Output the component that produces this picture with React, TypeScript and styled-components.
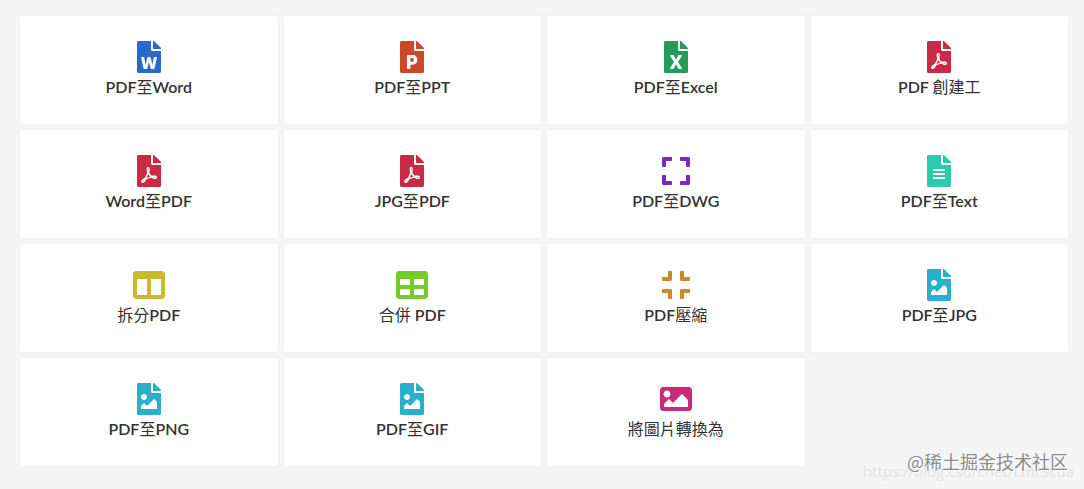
import React from "react";
import styled, { createGlobalStyle } from "styled-components";
import type { IconType } from "react-icons";
import {
  FaColumns,
  FaCompress,
  FaExpand,
  FaFileAlt,
  FaFileExcel,
  FaFileImage,
  FaFilePdf,
  FaFilePowerpoint,
  FaFileWord,
  FaImage,
  FaTable,
} from "react-icons/fa";

const GlobalStyle = createGlobalStyle`
  * { box-sizing: border-box; }
  body {
    margin: 0;
    background: #f5f5f5;
    color: #333;
    font-family: Lato, "Noto Sans CJK TC", sans-serif;
  }
`;

const Page = styled.main`
  position: relative;
  padding: 16px 16px 23px 20px;
`;

const ToolGrid = styled.nav`
  display: grid;
  grid-template-columns: repeat(4, minmax(0, 1fr));
  gap: 6px;
`;

const ToolCard = styled.a`
  display: flex;
  flex-direction: column;
  align-items: center;
  padding: 25px 8px;
  background: #fff;
  border-radius: 2px;
  box-shadow: 0 0 3px rgba(0, 0, 0, 0.04);
  color: inherit;
  text-decoration: none;
`;

const ToolIcon = styled.span<{ $color: string }>`
  display: flex;
  font-size: 32px;
  color: ${(p) => p.$color};
`;

const ToolLabel = styled.span`
  margin-top: 2px;
  font-size: 16px;
  line-height: 24px;
  font-weight: 600;
  white-space: pre;
`;

const Cjk = styled.span`
  font-weight: 400;
`;

const Watermark = styled.div`
  position: absolute;
  right: 16px;
  bottom: 16px;
  font: 18px/24px "Noto Sans CJK SC", sans-serif;
  color: #8c8c8c;
  text-shadow: 1px 1px 1px #fff;
`;

const SourceMark = styled.div`
  position: absolute;
  right: 10px;
  bottom: 8px;
  font: 15px/20px "Open Sans", sans-serif;
  color: #e2e2e2;
`;

interface Tool {
  label: string;
  color: string;
  icon: IconType;
}

const tools: Tool[] = [
  { label: "PDF至Word", color: "#2a68cb", icon: FaFileWord },
  { label: "PDF至PPT", color: "#cb482a", icon: FaFilePowerpoint },
  { label: "PDF至Excel", color: "#259b57", icon: FaFileExcel },
  { label: "PDF 創建工", color: "#cb2a45", icon: FaFilePdf },
  { label: "Word至PDF", color: "#cb2a45", icon: FaFilePdf },
  { label: "JPG至PDF", color: "#cb2a45", icon: FaFilePdf },
  { label: "PDF至DWG", color: "#762acb", icon: FaExpand },
  { label: "PDF至Text", color: "#2acbb0", icon: FaFileAlt },
  { label: "拆分PDF", color: "#cbbb2a", icon: FaColumns },
  { label: "合併 PDF", color: "#76cb2a", icon: FaTable },
  { label: "PDF壓縮", color: "#cb892a", icon: FaCompress },
  { label: "PDF至JPG", color: "#2ab0cb", icon: FaFileImage },
  { label: "PDF至PNG", color: "#2ab0cb", icon: FaFileImage },
  { label: "PDF至GIF", color: "#2ab0cb", icon: FaFileImage },
  { label: "將圖片轉換為", color: "#cb2a7b", icon: FaImage },
];

function MixedText({ text }: { text: string }) {
  const runs = text.split(/([\u4e00-\u9fff]+)/).filter(Boolean);
  return (
    <>
      {runs.map((run, i) =>
        /[\u4e00-\u9fff]/.test(run) ? <Cjk key={i}>{run}</Cjk> : run
      )}
    </>
  );
}

export default function App() {
  return (
    <>
      <GlobalStyle />
      <Page>
        <ToolGrid>
          {tools.map(({ label, color, icon: Icon }) => (
            <ToolCard key={label} href="#">
              <ToolIcon $color={color}>
                <Icon aria-hidden />
              </ToolIcon>
              <ToolLabel>
                <MixedText text={label} />
              </ToolLabel>
            </ToolCard>
          ))}
        </ToolGrid>
        <SourceMark>https://blog.csdn.net/LmrScda</SourceMark>
        <Watermark>@稀土掘金技术社区</Watermark>
      </Page>
    </>
  );
}
